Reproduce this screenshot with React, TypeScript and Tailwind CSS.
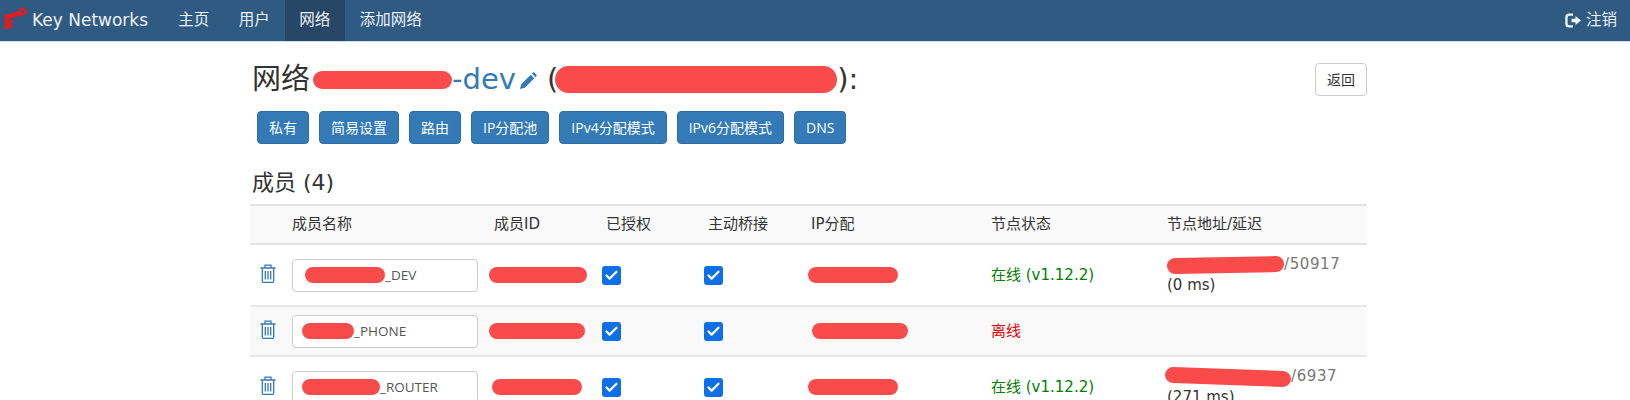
import { Check } from 'lucide-react';

const font = "font-['DejaVu_Sans','Noto_Sans_CJK_SC',sans-serif]";
const uiFont = "font-['Open_Sans','Noto_Sans_CJK_SC',sans-serif]";

function KeyLogo() {
  return (
    <svg width="26" height="30" viewBox="0 0 26 30" className="shrink-0">
      <circle cx="19.5" cy="5.5" r="2.8" fill="none" stroke="#e01b22" strokeWidth="2.6" />
      <path d="M17.5 5 L1.5 9 L1.5 23 L6 23 L6 13 L18 9.5 Z" fill="#e01b22" />
      <path d="M6 15.5 L9.5 15 M5 17 L9.5 21.5" stroke="#e01b22" strokeWidth="3" fill="none" />
    </svg>
  );
}

function Pencil() {
  return (
    <svg width="18" height="18" viewBox="0 0 20 20" fill="#337ab7" className="ml-[3px] mt-[3px]">
      <path d="M1 19 L2.5 13.5 L13 3 L17 7 L6.5 17.5 Z M14.3 1.7 L15.5 0.6 Q16.2 0 17 0.6 L19.4 3 Q20 3.8 19.4 4.5 L18.3 5.7 Z" />
    </svg>
  );
}

function Trash() {
  return (
    <svg width="16" height="19" viewBox="0 0 16 19" fill="none" stroke="#337ab7" strokeWidth="1.3">
      <path d="M0.5 4 H15.5 M5 4 V1.2 H11 V4" />
      <path d="M2.3 4 V17 Q2.3 18.3 3.5 18.3 H12.5 Q13.7 18.3 13.7 17 V4" />
      <path d="M5.3 7 V15.5 M8 7 V15.5 M10.7 7 V15.5" />
    </svg>
  );
}

function Logout() {
  return (
    <svg width="17" height="15" viewBox="0 0 17 15" fill="#f4f7fa">
      <path d="M4 0.5 H8 V2.8 H4.2 Q2.6 2.8 2.6 4.2 V10.8 Q2.6 12.2 4.2 12.2 H8 V14.5 H4 Q0.3 14.5 0.3 11 V4 Q0.3 0.5 4 0.5 Z" />
      <path d="M6.5 5.7 H10.5 V3 L16 7.5 L10.5 12 V9.3 H6.5 Z" />
    </svg>
  );
}

// red marker scribble hiding private values
function Scribble({ w }: { w: string }) {
  return <span className={`inline-block h-[16px] shrink-0 rounded-full bg-[#f94c4a] align-middle ${w}`} />;
}

function Box() {
  return (
    <span className="flex size-[19px] items-center justify-center rounded-[3px] bg-[#0f6fe6]">
      <Check size={15} strokeWidth={3.5} color="white" />
    </span>
  );
}

const headers = ['', '成员名称', '成员ID', '已授权', '主动桥接', 'IP分配', '节点状态', '节点地址/延迟'];

const members = [
  {
    nameW: 'w-[80px]',
    name: '_DEV',
    idW: 'w-[98px]',
    ipW: 'w-[90px]',
    online: true,
    addrW: 'w-[117px] -rotate-1',
    port: '/50917',
    ms: '(0 ms)',
    rowH: 'h-[62px]',
    bg: 'bg-white',
  },
  {
    nameW: 'w-[52px] -ml-[3px]',
    name: '_PHONE',
    idW: 'w-[96px]',
    ipW: 'w-[96px] ml-[4px]',
    online: false,
    addrW: '',
    port: '',
    ms: '',
    rowH: 'h-[50px]',
    bg: 'bg-[#f9f9f9]',
  },
  {
    nameW: 'w-[78px] -ml-[3px]',
    name: '_ROUTER',
    idW: 'w-[90px] ml-[3px]',
    ipW: 'w-[90px]',
    online: true,
    addrW: 'w-[126px] rotate-2 -ml-[2px]',
    port: '/6937',
    ms: '(271 ms)',
    rowH: 'h-[62px]',
    bg: 'bg-white',
  },
];

export default function App() {
  return (
    <div className={`h-[400px] overflow-hidden bg-white text-[15px] text-[#333] ${font}`}>
      {/* Navbar */}
      <nav className="flex h-[42px] items-stretch justify-between border-b border-[#cfdcea] bg-[#2f5a82] text-[15.5px] text-[#eef2f6]">
        <div className="flex items-stretch">
          <a className="flex w-[163.5px] items-center pl-[3px] text-[17px]">
            <KeyLogo />
            <span className="ml-[3px]">Key Networks</span>
          </a>
          <a className="flex items-center px-[14.75px]">主页</a>
          <a className="flex items-center px-[14.75px]">用户</a>
          <a className="flex items-center bg-[#264766] px-[14.75px]">网络</a>
          <a className="flex items-center px-[14.75px]">添加网络</a>
        </div>
        <a className="flex items-center gap-[4px] pr-[13px]">
          <Logout />
          注销
        </a>
      </nav>

      <div className="ml-[250px] w-[1117px]">
        {/* Title */}
        <div className="flex items-start justify-between pt-[17px]">
          <h2 className="flex h-[40px] items-center pl-[2px] text-[29px] font-normal leading-[40px]">
            <span>网络</span>
            <Scribble w="w-[139px] ml-[3px] h-[18px] mt-[2px]" />
            <span className="text-[#337ab7]">-dev</span>
            <Pencil />
            <span className="ml-[10px]">(</span>
            <Scribble w="w-[282px] h-[27px] -ml-[3px]" />
            <span>):</span>
          </h2>
          <button className={`mt-[4px] h-[33px] rounded border border-[#ccc] bg-white px-[11px] text-[14px] text-[#333] ${uiFont}`}>
            返回
          </button>
        </div>

        {/* Actions */}
        <div className={`mt-[12px] flex gap-[10px] pl-[7px] ${uiFont}`}>
          {['私有', '简易设置', '路由', 'IP分配池', 'IPv4分配模式', 'IPv6分配模式', 'DNS'].map((label) => (
            <button
              key={label}
              className="h-[33px] rounded border border-[#2e6da4] bg-[#337ab7] px-[11px] text-[14px] text-white"
            >
              {label}
            </button>
          ))}
        </div>

        <h3 className="mt-[21px] pl-[2px] text-[22px] font-normal leading-[36px]">成员 (4)</h3>

        {/* Members */}
        <table className="mt-[3px] w-full table-fixed border-collapse">
          <colgroup>
            <col className="w-[34px]" />
            <col className="w-[202px]" />
            <col className="w-[112px]" />
            <col className="w-[102px]" />
            <col className="w-[103px]" />
            <col className="w-[180px]" />
            <col className="w-[176px]" />
            <col className="w-[208px]" />
          </colgroup>
          <thead>
            <tr className="h-[39px] border-y-2 border-[#e4e4e4] bg-[#f9f9f9]">
              {headers.map((h, i) => (
                <th key={i} className="px-[8px] text-left font-normal">
                  {h}
                </th>
              ))}
            </tr>
          </thead>
          <tbody>
            {members.map((m) => (
              <tr key={m.name} className={`border-b-2 border-[#e8e8e8] ${m.rowH} ${m.bg}`}>
                <td className="pb-[4px] pl-[10px]">
                  <Trash />
                </td>
                <td className="px-[8px]">
                  <div className={`flex h-[33px] w-[186px] items-center rounded border border-[#ccc] bg-white pl-[12px] text-[13.5px] text-[#555] ${uiFont}`}>
                    <Scribble w={m.nameW} />
                    <span>{m.name}</span>
                  </div>
                </td>
                <td className="pl-[3px]">
                  <Scribble w={m.idW} />
                </td>
                <td className="pl-[4px]">
                  <Box />
                </td>
                <td className="pl-[4px]">
                  <Box />
                </td>
                <td className="pl-[5px]">
                  <Scribble w={m.ipW} />
                </td>
                <td className="px-[8px]">
                  {m.online ? (
                    <span className="text-[#008000]">在线 (v1.12.2)</span>
                  ) : (
                    <span className="text-[#e60000]">离线</span>
                  )}
                </td>
                <td className="px-[8px] leading-[21px]">
                  {m.port && (
                    <>
                      <div className="flex items-center">
                        <Scribble w={m.addrW} />
                        <span className="tracking-[0.6px] text-[#777]">{m.port}</span>
                      </div>
                      <div>{m.ms}</div>
                    </>
                  )}
                </td>
              </tr>
            ))}
          </tbody>
        </table>
      </div>
    </div>
  );
}
